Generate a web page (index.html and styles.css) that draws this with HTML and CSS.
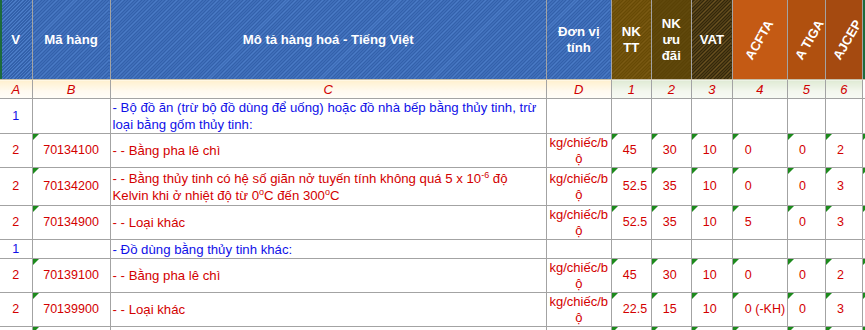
FILE: index.html
```html
<!DOCTYPE html>
<html lang="vi">
<head>
<meta charset="utf-8">
<link rel="stylesheet" href="styles.css">
</head>
<body>
<table class="sheet">
  <colgroup>
    <col class="c-v"><col class="c-b"><col class="c-c"><col class="c-d">
    <col class="c-1"><col class="c-2"><col class="c-3"><col class="c-4"><col class="c-5"><col class="c-6"><col class="c-7">
  </colgroup>
  <tr class="r-head">
    <th class="h-blue first">V</th>
    <th class="h-blue">Mã hàng</th>
    <th class="h-blue">Mô tả hàng hoá - Tiếng Việt</th>
    <th class="h-blue">Đơn vị<br>tính</th>
    <th class="h-br1">NK<br>TT</th>
    <th class="h-br2">NK<br>ưu<br>đãi</th>
    <th class="h-br3">VAT</th>
    <th class="h-or1"><span class="rot">ACFTA</span></th>
    <th class="h-or2"><span class="rot">A TIGA</span></th>
    <th class="h-or3"><span class="rot">AJCEP</span></th>
    <th class="h-sel"></th>
  </tr>
  <tr class="r-let">
    <td class="l-cream">A</td><td class="l-cream">B</td><td class="l-cream">C</td><td class="l-cream">D</td>
    <td class="l-green">1</td><td class="l-green">2</td><td class="l-green">3</td><td class="l-green">4</td><td class="l-green">5</td><td class="l-green">6</td><td class="l-blank"></td>
  </tr>
  <tr class="r-34 blue">
    <td class="ctr">1</td><td></td>
    <td class="desc">- Bộ đồ ăn (trừ bộ đồ dùng để uống) hoặc đồ nhà bếp bằng thủy tinh, trừ<br>loại bằng gốm thủy tinh:</td>
    <td></td><td></td><td></td><td></td><td></td><td></td><td></td><td></td>
  </tr>
  <tr class="r-33 red">
    <td class="ctr">2</td><td class="ctr m">70134100</td>
    <td class="desc">- - Bằng pha lê chì</td>
    <td class="unit">kg/chiếc/b<br>ộ</td>
    <td class="num m">45</td><td class="num m">30</td><td class="num m">10</td><td class="num n4 m">0</td><td class="num m">0</td><td class="num m">2</td><td class="m"></td>
  </tr>
  <tr class="r-37 red">
    <td class="ctr">2</td><td class="ctr m">70134200</td>
    <td class="desc">- - Bằng thủy tinh có hệ số giãn nở tuyến tính không quá 5 x 10<sup>-6</sup> độ<br>Kelvin khi ở nhiệt độ từ 0<sup>o</sup>C đến 300<sup>o</sup>C</td>
    <td class="unit">kg/chiếc/b<br>ộ</td>
    <td class="num m">52.5</td><td class="num m">35</td><td class="num m">10</td><td class="num n4 m">0</td><td class="num m">0</td><td class="num m">3</td><td class="m"></td>
  </tr>
  <tr class="r-33 red">
    <td class="ctr">2</td><td class="ctr m">70134900</td>
    <td class="desc">- - Loại khác</td>
    <td class="unit">kg/chiếc/b<br>ộ</td>
    <td class="num m">52.5</td><td class="num m">35</td><td class="num m">10</td><td class="num n4 m">5</td><td class="num m">0</td><td class="num m">3</td><td class="m"></td>
  </tr>
  <tr class="r-18 blue">
    <td class="ctr">1</td><td></td>
    <td class="desc">- Đồ dùng bằng thủy tinh khác:</td>
    <td></td><td></td><td></td><td></td><td></td><td></td><td></td><td></td>
  </tr>
  <tr class="r-33 red">
    <td class="ctr">2</td><td class="ctr m">70139100</td>
    <td class="desc">- - Bằng pha lê chì</td>
    <td class="unit">kg/chiếc/b<br>ộ</td>
    <td class="num m">45</td><td class="num m">30</td><td class="num m">10</td><td class="num n4 m">0</td><td class="num m">0</td><td class="num m">2</td><td class="m"></td>
  </tr>
  <tr class="r-33 red">
    <td class="ctr">2</td><td class="ctr m">70139900</td>
    <td class="desc">- - Loại khác</td>
    <td class="unit">kg/chiếc/b<br>ộ</td>
    <td class="num m">22.5</td><td class="num m">15</td><td class="num m">10</td><td class="num n4 m">0 (-KH)</td><td class="num m">0</td><td class="num m">3</td><td class="m"></td>
  </tr>
  <tr class="r-33 red">
    <td></td><td class="m"></td><td></td><td></td>
    <td class="m"></td><td class="m"></td><td class="m"></td><td class="m"></td><td class="m"></td><td class="m"></td><td class="m"></td>
  </tr>
</table>
</body>
</html>
```

FILE: styles.css
```css
html, body {
  margin: 0;
  padding: 0;
  background: #ffffff;
  overflow: hidden;
}

.sheet {
  border-collapse: collapse;
  table-layout: fixed;
  width: 880px;
  font-family: "Liberation Sans", Arial, sans-serif;
  font-size: 12.5px;
}

.c-v { width: 32px; }
.c-b { width: 78px; }
.c-c { width: 436px; }
.c-d { width: 65px; }
.c-1 { width: 40px; }
.c-2 { width: 40px; }
.c-3 { width: 41px; }
.c-4 { width: 55px; }
.c-5 { width: 38px; }
.c-6 { width: 37px; }
.c-7 { width: 17px; }

.sheet th,
.sheet td {
  border: 1px solid #a3a3a3;
  padding: 0 2px;
  overflow: hidden;
  white-space: nowrap;
}

.sheet tr:first-child th { border-top: none; }
.sheet tr > :first-child { border-left: none; }

/* header */
.r-head th {
  height: 79px;
  color: #ffffff;
  font-weight: bold;
  font-size: 13.2px;
  line-height: 16px;
  text-align: center;
  vertical-align: middle;
  padding: 0;
  overflow: visible;
  border-bottom-color: #c8bfa8;
}

.h-blue {
  background: repeating-linear-gradient(-45deg, #3361ab 0px, #3361ab 1.4px, #4a7bc6 1.4px, #4a7bc6 2.4px);
}
.h-blue.first { box-shadow: inset 2px 0 0 #1d6b3c; }

.h-br1 {
  background: repeating-linear-gradient(-45deg, #674a05 0px, #674a05 1.4px, #7a5a14 1.4px, #7a5a14 2.4px);
}
.h-br2 {
  background: repeating-linear-gradient(-45deg, #5a4206 0px, #5a4206 1.4px, #624a0e 1.4px, #624a0e 2.4px);
}
.h-br3 {
  background: repeating-linear-gradient(-45deg, #33270a 0px, #33270a 1.4px, #6a5120 1.4px, #6a5120 2.4px);
}
.h-or1 { background: #c45a14; }
.h-or2 { background: #b0500f; }
.h-or3 { background: #a54a10; }
.h-sel {
  background: #ffffff;
  box-shadow: inset 2px -2px 0 #1d6b3c;
}

.rot {
  display: inline-block;
  transform: rotate(-60deg);
  font-size: 13px;
  line-height: 14px;
}

/* column letters row */
.r-let td {
  height: 18px;
  color: #d00000;
  font-style: italic;
  font-size: 13px;
  text-align: center;
  vertical-align: middle;
  padding: 0;
}
.l-cream { background: linear-gradient(#fff0cf, #fffaf0 60%, #fffdf8); }
.l-green { background: linear-gradient(#dfead4, #f3f7ee 60%, #f7faf4); }
.l-blank { background: #ffffff; }

/* data rows */
.r-34 td { height: 34px; }
.r-33 td { height: 33px; }
.r-37 td { height: 37px; }
.r-18 td { height: 18px; }

.sheet td { vertical-align: middle; line-height: 17px; }

.red td { color: #d30000; }
.blue td { color: #1010e8; }

.ctr { text-align: center; }
.desc { text-align: left; font-size: 13.2px; }
.unit {
  text-align: center;
  font-size: 13px;
  line-height: 16px !important;
  padding: 0 !important;
}
.num { text-align: left; padding-left: 11px !important; }
.n4 { padding-left: 12px !important; }

sup {
  font-size: 9px;
  line-height: 0;
  vertical-align: 5px;
}

.m { position: relative; }
.m::before {
  content: "";
  position: absolute;
  left: 0;
  top: 0;
  width: 0;
  height: 0;
  border-top: 6px solid #1c8a1c;
  border-right: 6px solid transparent;
}
```
